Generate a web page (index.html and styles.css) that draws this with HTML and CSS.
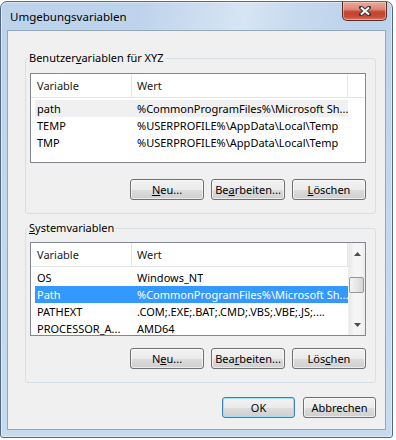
FILE: index.html
```html
<!DOCTYPE html>
<html lang="de">
<head>
    <meta charset="UTF-8">
    <meta name="viewport" content="width=device-width, initial-scale=1.0">
    <title>Umgebungsvariablen</title>
    <link rel="stylesheet" href="styles.css">
</head>
<body>
    <div class="window">
        <div class="titlebar">
            <span class="title">Umgebungsvariablen</span>
            <button class="close" aria-label="Schließen">
                <svg width="12" height="10" viewBox="0 0 12 10">
                    <path d="M2 1.5 L10 8.5 M10 1.5 L2 8.5" stroke="#3a3a3a" stroke-width="4" stroke-linecap="square"/>
                    <path d="M2 1.5 L10 8.5 M10 1.5 L2 8.5" stroke="#ffffff" stroke-width="2"/>
                </svg>
            </button>
        </div>
        <div class="client">
            <!-- Benutzervariablen -->
            <fieldset class="group group-user">
                <legend>Benutzer<u>v</u>ariablen für XYZ</legend>
                <div class="list list-user">
                    <div class="list-main">
                        <div class="list-head">
                            <span class="col-name">Variable</span>
                            <span class="col-value">Wert</span>
                        </div>
                        <div class="rows">
                            <div class="row inactive"><span class="cell-name">path</span><span class="cell-value">%CommonProgramFiles%\Microsoft Sh...</span></div>
                            <div class="row"><span class="cell-name">TEMP</span><span class="cell-value">%USERPROFILE%\AppData\Local\Temp</span></div>
                            <div class="row"><span class="cell-name">TMP</span><span class="cell-value">%USERPROFILE%\AppData\Local\Temp</span></div>
                        </div>
                    </div>
                </div>
                <div class="buttons">
                    <button class="btn"><u>N</u>eu...</button>
                    <button class="btn">Be<u>a</u>rbeiten...</button>
                    <button class="btn"><u>L</u>öschen</button>
                </div>
            </fieldset>

            <!-- Systemvariablen -->
            <fieldset class="group group-system">
                <legend><u>S</u>ystemvariablen</legend>
                <div class="list list-system">
                    <div class="list-main">
                        <div class="list-head">
                            <span class="col-name">Variable</span>
                            <span class="col-value">Wert</span>
                        </div>
                        <div class="rows">
                            <div class="row"><span class="cell-name">OS</span><span class="cell-value">Windows_NT</span></div>
                            <div class="row selected"><span class="cell-name">Path</span><span class="cell-value">%CommonProgramFiles%\Microsoft Sh...</span></div>
                            <div class="row"><span class="cell-name">PATHEXT</span><span class="cell-value">.COM;.EXE;.BAT;.CMD;.VBS;.VBE;.JS;....</span></div>
                            <div class="row"><span class="cell-name">PROCESSOR_A...</span><span class="cell-value">AMD64</span></div>
                        </div>
                    </div>
                    <div class="scrollbar">
                        <div class="arrow">
                            <svg width="7" height="4" viewBox="0 0 7 4"><polygon points="3.5,0 7,4 0,4" fill="#4d4d4d"/></svg>
                        </div>
                        <div class="track"><div class="thumb"></div></div>
                        <div class="arrow">
                            <svg width="7" height="4" viewBox="0 0 7 4"><polygon points="0,0 7,0 3.5,4" fill="#4d4d4d"/></svg>
                        </div>
                    </div>
                </div>
                <div class="buttons">
                    <button class="btn">N<u>e</u>u...</button>
                    <button class="btn">Bea<u>r</u>beiten...</button>
                    <button class="btn">Lös<u>c</u>hen</button>
                </div>
            </fieldset>

            <div class="dialog-buttons">
                <button class="btn default">OK</button>
                <button class="btn">Abbrechen</button>
            </div>
        </div>
    </div>
</body>
</html>
```

FILE: styles.css
```css
body {
    margin: 0;
    background-color: #ffffff;
    font-family: "Noto Sans", sans-serif;
    font-size: 11px;
    color: #000;
}

.window {
    box-sizing: border-box;
    width: 393px;
    height: 437px;
    margin-top: 1px;
    border: 1px solid #55697e;
    border-radius: 7px 7px 3px 3px;
    padding: 0 6px 7px 6px;
    display: flex;
    flex-direction: column;
    background: linear-gradient(to bottom, #bdd3eb 0, #c1d7ee 40%, #c6dbf0 100%);
    box-shadow: inset 0 0 0 1px rgba(255, 255, 255, 0.45);
}

.titlebar {
    height: 28px;
    margin: 0 -6px;
    padding: 0 6px;
    display: flex;
    justify-content: space-between;
    align-items: flex-start;
    border-radius: 6px 6px 0 0;
    background: linear-gradient(100deg, rgba(255, 255, 255, 0) 35%, rgba(255, 255, 255, 0.4) 62%, rgba(255, 255, 255, 0.15) 75%, rgba(255, 255, 255, 0) 90%);
}

.title {
    margin: 7px 0 0 3px;
    font-size: 11.5px;
    line-height: 16px;
}

.close {
    box-sizing: border-box;
    width: 45px;
    height: 19px;
    margin: 0 -1px 0 0;
    padding: 0;
    border: 1px solid #5b2a26;
    border-top: none;
    border-radius: 0 0 5px 5px;
    background: linear-gradient(to bottom, #e9a99b 0%, #dc8a79 40%, #c6452e 55%, #c54a35 80%, #d57462 100%);
    box-shadow: inset 0 0 0 1px rgba(255, 220, 210, 0.5);
    display: flex;
    align-items: center;
    justify-content: center;
}

.client {
    flex: 1;
    background-color: #f0f0f0;
    border: 1px solid #95a7bb;
    display: flex;
    flex-direction: column;
}

.group {
    margin: 19px 9px 0 17px;
    padding: 0 9px 13px 4px;
    border: 1px solid #d5dfe5;
    border-radius: 3px;
}

.group-system {
    margin-top: 6px;
}

.group legend {
    margin-left: -2px;
    padding: 0 1px;
    line-height: 16px;
}

.list {
    display: flex;
    background-color: #fff;
    border: 1px solid #828790;
    margin-top: 7px;
    overflow: hidden;
}

.list-user {
    height: 90px;
    box-sizing: border-box;
}

.list-system {
    height: 94px;
    box-sizing: border-box;
    margin-top: 6px;
}

.list-main {
    flex: 1;
    min-width: 0;
}

.list-head {
    height: 24px;
    box-sizing: border-box;
    display: flex;
    border-bottom: 1px solid #e5e5e5;
    line-height: 23px;
    color: #1a1a1a;
}

.col-name,
.col-value {
    box-sizing: border-box;
    flex-shrink: 0;
    border-right: 1px solid #e5e5e5;
    white-space: nowrap;
}

.col-name {
    width: 101px;
    padding-left: 6px;
}

.col-value {
    width: 216px;
    padding-left: 5px;
}

.rows {
    padding-top: 2px;
}

.row {
    display: flex;
    width: 313px;
    height: 17px;
    margin-left: 4px;
    line-height: 17px;
    white-space: nowrap;
    overflow: hidden;
}

.row.inactive {
    background-color: #f0f0f0;
}

.row.selected {
    background-color: #3399ff;
    color: #fff;
}

.cell-name {
    box-sizing: border-box;
    flex-shrink: 0;
    width: 96px;
    padding-left: 2px;
    overflow: hidden;
}

.cell-value {
    padding-left: 6px;
    overflow: hidden;
}

.scrollbar {
    width: 17px;
    display: flex;
    flex-direction: column;
    background: linear-gradient(to right, #e8e8e8, #f5f5f5 30%, #f5f5f5 70%, #ececec);
    border-left: 1px solid #f0f0f0;
    box-sizing: border-box;
}

.arrow {
    height: 17px;
    display: flex;
    align-items: center;
    justify-content: center;
}

.arrow:first-child {
    align-items: flex-end;
    padding-bottom: 4px;
    box-sizing: border-box;
}

.arrow:last-child {
    align-items: flex-start;
    padding-top: 5px;
    box-sizing: border-box;
}

.track {
    flex: 1;
}

.thumb {
    box-sizing: border-box;
    width: 15px;
    height: 16px;
    margin-top: 17px;
    border: 1px solid #979797;
    border-radius: 2px;
    background: linear-gradient(to right, #f4f4f4, #e6e6e6 50%, #d6d6d6);
}

.buttons {
    display: flex;
    justify-content: flex-end;
    gap: 7px;
    margin-top: 16px;
}

.group-system .buttons {
    margin-top: 12px;
}

.btn {
    box-sizing: border-box;
    width: 74px;
    height: 21px;
    padding: 0;
    border: 1px solid #707070;
    border-radius: 3px;
    font-family: "Noto Sans", sans-serif;
    font-size: 11px;
    line-height: 18px;
    color: #000;
    background: linear-gradient(to bottom, #f2f2f2 0%, #ebebeb 50%, #dddddd 51%, #cfcfcf 100%);
    box-shadow: inset 0 0 0 1px rgba(255, 255, 255, 0.6);
}

.dialog-buttons {
    display: flex;
    justify-content: flex-end;
    gap: 8px;
    margin: 14px 9px 0 0;
}

.dialog-buttons .btn {
    width: 73px;
}

.btn.default {
    border-color: #3c7fb1;
    box-shadow: inset 0 0 0 1px #9fe0f8;
}
```
